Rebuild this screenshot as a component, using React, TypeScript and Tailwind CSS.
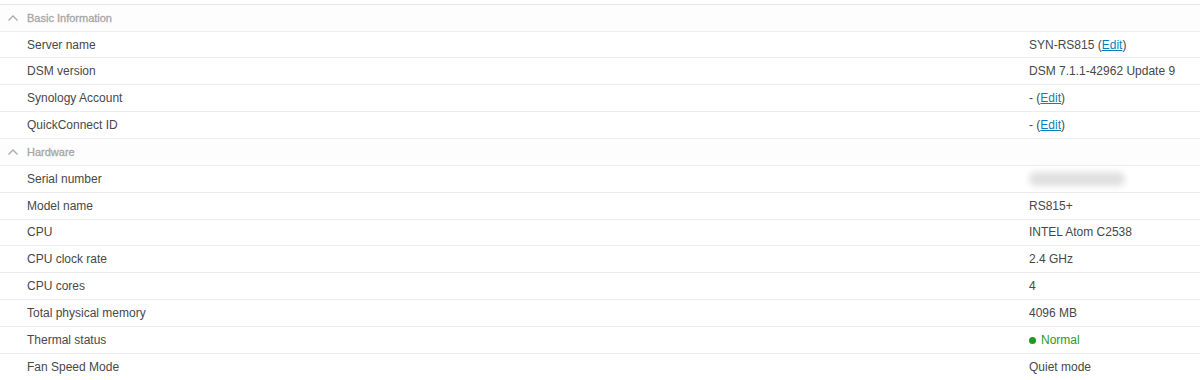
import React from "react";

type Row = { label: string; value: React.ReactNode };

const Edit = () => (
  <>
    (<span className="text-[#0a7fbf] underline">Edit</span>)
  </>
);

const sections: { title: string; rows: Row[] }[] = [
  {
    title: "Basic Information",
    rows: [
      { label: "Server name", value: <>SYN-RS815 <Edit /></> },
      { label: "DSM version", value: "DSM 7.1.1-42962 Update 9" },
      { label: "Synology Account", value: <>- <Edit /></> },
      { label: "QuickConnect ID", value: <>- <Edit /></> },
    ],
  },
  {
    title: "Hardware",
    rows: [
      {
        label: "Serial number",
        value: <div className="h-[14px] w-[96px] rounded-full bg-[#e0e0e0] blur-[3px]" />,
      },
      { label: "Model name", value: "RS815+" },
      { label: "CPU", value: "INTEL Atom C2538" },
      { label: "CPU clock rate", value: "2.4 GHz" },
      { label: "CPU cores", value: "4" },
      { label: "Total physical memory", value: "4096 MB" },
      {
        label: "Thermal status",
        value: (
          <span className="flex items-center gap-[5px] text-[#2a9a2a]">
            <span className="h-[7px] w-[7px] rounded-full bg-[#1f9a1f]" />
            Normal
          </span>
        ),
      },
      { label: "Fan Speed Mode", value: "Quiet mode" },
    ],
  },
];

export default function App() {
  return (
    <div
      className="h-[380px] w-[1200px] overflow-hidden bg-white pt-[4px] text-[12px] text-[#484848]"
      style={{ fontFamily: '"Liberation Sans", Arial, sans-serif' }}
    >
      <div className="border-t border-[#e6e6e6]">
        {sections.map((s) => (
          <div key={s.title}>
            <div className="flex h-[26.6px] items-center border-b border-[#ededed] bg-[#fdfdfd]">
              <svg width="12" height="8" viewBox="0 0 12 8" className="ml-[7px] mr-[8px]">
                <path d="M1.5 6.5 L6 2 L10.5 6.5" fill="none" stroke="#aaaaaa" strokeWidth="1.3" />
              </svg>
              <span className="text-[11px] text-[#a6a6a6] [-webkit-text-stroke:0.3px_#a6a6a6]">{s.title}</span>
            </div>
            {s.rows.map((r) => (
              <div key={r.label} className="flex h-[26.9px] items-center border-b border-[#ededed]">
                <div className="flex-1 pl-[27px]">{r.label}</div>
                <div className="flex w-[171px] items-center">{r.value}</div>
              </div>
            ))}
          </div>
        ))}
      </div>
    </div>
  );
}
